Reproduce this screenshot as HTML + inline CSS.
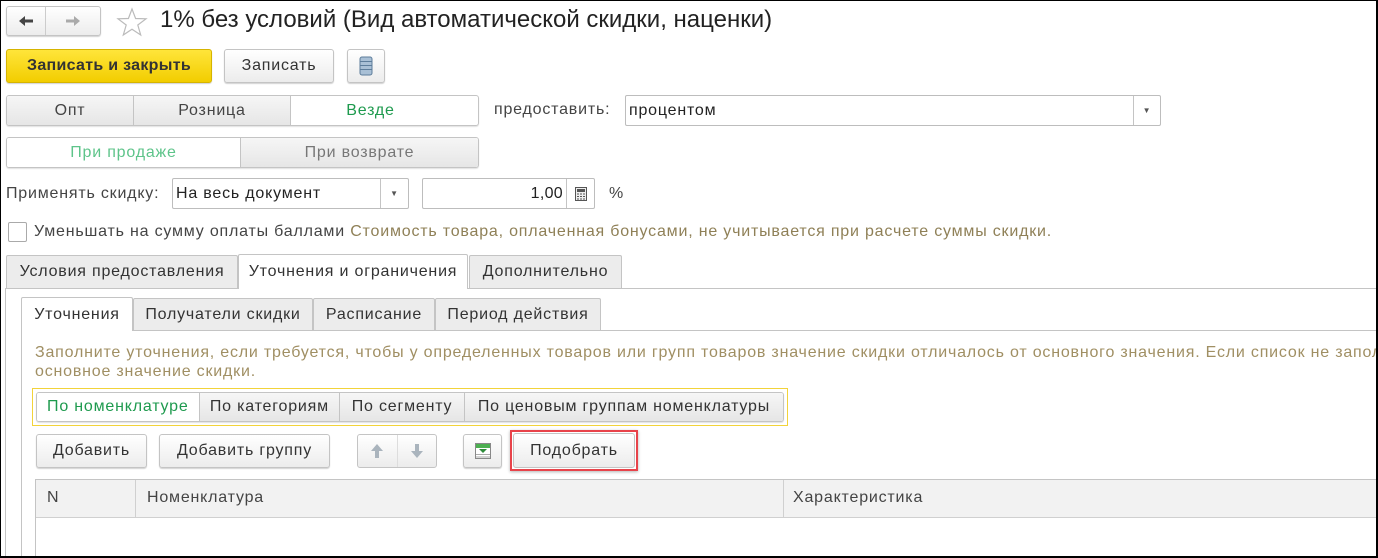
<!DOCTYPE html>
<html><head><meta charset="utf-8"><style>
*{box-sizing:border-box;margin:0;padding:0}
html,body{width:1378px;height:558px;overflow:hidden}
body{background:#fff;font-family:"Liberation Sans",Arial,sans-serif;font-size:16px;letter-spacing:0.8px;color:#333;position:relative}
.a{position:absolute;white-space:nowrap}
.btn{position:absolute;border:1px solid #c4c4c4;border-radius:3px;background:linear-gradient(#fff,#ececec);box-shadow:0 1px 1px rgba(0,0,0,.18);display:flex;align-items:center;justify-content:center;color:#333;white-space:nowrap}
.seg{position:absolute;border:1px solid #c4c4c4;border-radius:3px;display:flex;overflow:hidden;box-shadow:0 1px 1px rgba(0,0,0,.12)}
.seg div{display:flex;align-items:center;justify-content:center;background:linear-gradient(#f6f6f6,#e6e6e6);border-left:1px solid #c4c4c4;color:#444;white-space:nowrap}
.seg div:first-child{border-left:none}
.seg div.on{background:#fff}
.fld{position:absolute;border:1px solid #bdbdbd;border-radius:2px;background:#fff;display:flex;align-items:center;white-space:nowrap}
.tab{position:absolute;border:1px solid #c4c4c4;border-bottom:none;background:#ececec;display:flex;align-items:center;justify-content:center;color:#333;border-radius:2px 2px 0 0;white-space:nowrap}
.tab.on{background:#fff}
</style></head><body>
<div class="a" style="left:0;top:0;width:1378px;height:558px;border:1px solid #000;border-right:2px solid #000;border-bottom:2px solid #000;pointer-events:none;z-index:9"></div>

<div class="btn" style="left:6px;top:6px;width:95px;height:30px;padding:0">
 <div style="width:38px;display:flex;justify-content:center"><svg width="16" height="12"><path d="M1 6l6-5v3.5h8v3H7V11z" fill="#444"/></svg></div>
 <div style="width:1px;height:28px;background:#ccc"></div>
 <div style="width:55px;display:flex;justify-content:center"><svg width="16" height="12"><path d="M15 6L9 1v3.5H1v3h8V11z" fill="#aaa"/></svg></div>
</div>
<svg class="a" style="left:116px;top:7px" width="32" height="30" viewBox="0 0 32 30"><polygon points="16,2 19.6,11.5 30,11.8 21.8,18 24.7,28 16,22.2 7.3,28 10.2,18 2,11.8 12.4,11.5" fill="none" stroke="#bbb" stroke-width="1.2"/></svg>
<div class="a" style="left:160px;top:6px;font-size:24px;letter-spacing:0;color:#222">1% без условий (Вид автоматической скидки, наценки)</div>

<div class="btn" style="left:6px;top:49px;width:206px;height:34px;background:linear-gradient(#ffe53a,#f2cd00);border-color:#d6b400;font-weight:bold;letter-spacing:0.3px;color:#333">Записать и закрыть</div>
<div class="btn" style="left:224px;top:49px;width:110px;height:34px">Записать</div>
<div class="btn" style="left:347px;top:49px;width:38px;height:34px">
 <svg width="14" height="20" viewBox="0 0 14 20"><rect x="1" y="1" width="12" height="18" rx="2" fill="#a9c0d6" stroke="#5d7d9b"/><path d="M1 5.5h12M1 9.5h12M1 13.5h12" stroke="#5d7d9b"/></svg>
</div>

<div class="seg" style="left:6px;top:95px;width:473px;height:31px">
 <div style="width:126px">Опт</div><div style="width:157px">Розница</div><div class="on" style="width:160px;color:#1e9a4e">Везде</div>
</div>
<div class="a" style="left:494px;top:101px;color:#444">предоставить:</div>
<div class="fld" style="left:625px;top:95px;width:536px;height:31px"><span style="padding-left:3px;color:#222">процентом</span><div style="position:absolute;right:0;top:0;width:27px;height:29px;border-left:1px solid #c4c4c4;display:flex;align-items:center;justify-content:center;font-size:8px;color:#555">&#9660;</div></div>

<div class="seg" style="left:6px;top:137px;width:473px;height:31px">
 <div class="on" style="width:234px;color:#5ec48a">При продаже</div><div style="width:239px;color:#777">При возврате</div>
</div>

<div class="a" style="left:6px;top:185px;color:#444">Применять скидку:</div>
<div class="fld" style="left:172px;top:178px;width:237px;height:31px"><span style="padding-left:3px;color:#222">На весь документ</span><div style="position:absolute;right:0;top:0;width:28px;height:29px;border-left:1px solid #c4c4c4;display:flex;align-items:center;justify-content:center;font-size:8px;color:#555">&#9660;</div></div>
<div class="fld" style="left:422px;top:178px;width:173px;height:31px"><span style="position:absolute;right:31px;color:#222;letter-spacing:0.3px">1,00</span><div style="position:absolute;right:0;top:0;width:28px;height:29px;border-left:1px solid #c4c4c4;display:flex;align-items:center;justify-content:center"><svg width="12" height="14"><rect x="0.5" y="0.5" width="11" height="13" fill="#eee" stroke="#555"/><rect x="2" y="2" width="8" height="3" fill="#555"/><path d="M2 7h2M5 7h2M8 7h2M2 9.5h2M5 9.5h2M8 9.5h2M2 12h2M5 12h2M8 12h2" stroke="#555"/></svg></div></div>
<div class="a" style="left:609px;top:185px;color:#444">%</div>

<div class="a" style="left:8px;top:222px;width:19px;height:20px;border:1px solid #aaa;border-radius:2px;background:#fff"></div>
<div class="a" style="left:34px;top:223px;color:#444">Уменьшать на сумму оплаты баллами <span style="color:#8f8057">Стоимость товара, оплаченная бонусами, не учитывается при расчете суммы скидки.</span></div>

<div class="a" style="left:5px;top:288px;width:1373px;height:270px;border-top:1px solid #c4c4c4;border-left:1px solid #c4c4c4"></div>
<div class="tab" style="left:6px;top:255px;width:232px;height:33px">Условия предоставления</div>
<div class="tab on" style="left:238px;top:254px;width:230px;height:35px">Уточнения и ограничения</div>
<div class="tab" style="left:469px;top:255px;width:153px;height:33px">Дополнительно</div>

<div class="a" style="left:21px;top:330px;width:1357px;height:228px;border-top:1px solid #c4c4c4;border-left:1px solid #c4c4c4"></div>
<div class="tab on" style="left:21px;top:297px;width:112px;height:34px">Уточнения</div>
<div class="tab" style="left:133px;top:298px;width:180px;height:32px">Получатели скидки</div>
<div class="tab" style="left:313px;top:298px;width:122px;height:32px">Расписание</div>
<div class="tab" style="left:435px;top:298px;width:166px;height:32px">Период действия</div>

<div class="a" style="left:35px;top:343px;width:1341px;overflow:hidden;color:#a08f63;line-height:19px">Заполните уточнения, если требуется, чтобы у определенных товаров или групп товаров значение скидки отличалось от основного значения. Если список не запол<br>основное значение скидки.</div>

<div class="a" style="left:32px;top:388px;width:756px;height:38px;border:1px solid #f2d33a"></div>
<div class="seg" style="left:36px;top:392px;width:748px;height:30px">
 <div class="on" style="width:162px;color:#1e9a4e">По номенклатуре</div><div style="width:141px;color:#333">По категориям</div><div style="width:125px;color:#333">По сегменту</div><div style="width:320px;color:#333">По ценовым группам номенклатуры</div>
</div>

<div class="btn" style="left:36px;top:434px;width:111px;height:34px">Добавить</div>
<div class="btn" style="left:159px;top:434px;width:171px;height:34px">Добавить группу</div>
<div class="btn" style="left:357px;top:434px;width:80px;height:34px;padding:0;box-shadow:none">
 <div style="width:39px;display:flex;justify-content:center"><svg width="14" height="16"><path d="M7 1L1 8h4v7h4V8h4z" fill="#aab4bd"/></svg></div>
 <div style="width:1px;height:32px;background:#ddd"></div>
 <div style="width:39px;display:flex;justify-content:center"><svg width="14" height="16"><path d="M7 15L1 8h4V1h4v7h4z" fill="#aab4bd"/></svg></div>
</div>
<div class="btn" style="left:463px;top:434px;width:39px;height:34px"><svg width="16" height="16"><rect x="0.5" y="0.5" width="15" height="15" fill="#fff" stroke="#888"/><rect x="1" y="1" width="14" height="4" fill="#4caf50"/><path d="M4 6l4 4 4-4z" fill="#2e8b3a"/><path d="M1 11.5h14M1 14h14" stroke="#aaa"/></svg></div>
<div class="a" style="left:510px;top:430px;width:128px;height:41px;border:2px solid #e8434a;box-shadow:0 1px 3px rgba(0,0,0,.3)"></div>
<div class="btn" style="left:513px;top:433px;width:122px;height:35px;box-shadow:none">Подобрать</div>

<div class="a" style="left:35px;top:479px;width:1343px;height:79px;border-left:1px solid #c4c4c4;border-top:1px solid #c4c4c4"></div>
<div class="a" style="left:36px;top:480px;width:1342px;height:38px;background:#f2f2f2;border-bottom:1px solid #d0d0d0"></div>
<div class="a" style="left:135px;top:480px;width:1px;height:38px;background:#d0d0d0"></div>
<div class="a" style="left:783px;top:480px;width:1px;height:38px;background:#d0d0d0"></div>
<div class="a" style="left:47px;top:489px;color:#444">N</div>
<div class="a" style="left:147px;top:489px;color:#444">Номенклатура</div>
<div class="a" style="left:793px;top:489px;color:#444">Характеристика</div>
</body></html>
